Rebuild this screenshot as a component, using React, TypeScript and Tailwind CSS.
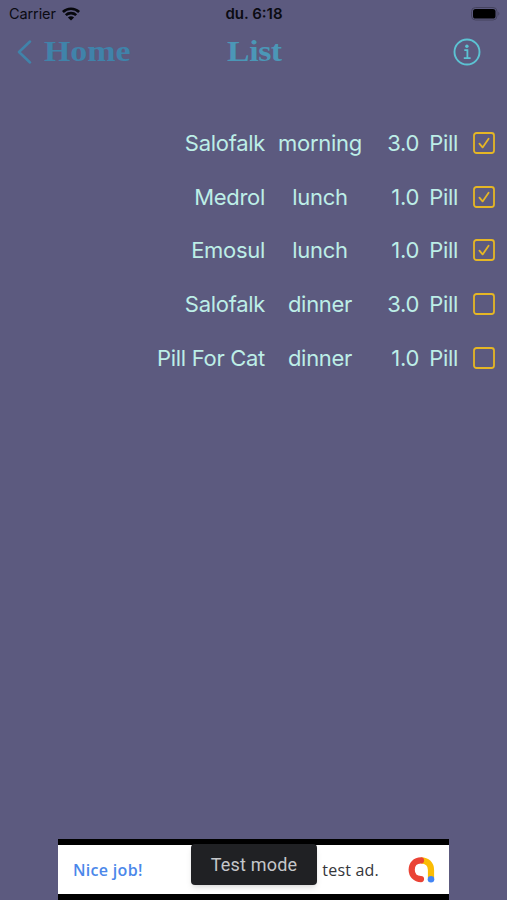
import type { ReactNode } from 'react'

interface Dose {
  name: string
  time: string
  amount: string
  unit: string
  taken: boolean
}

const DOSES: Dose[] = [
  { name: 'Salofalk', time: 'morning', amount: '3.0', unit: 'Pill', taken: true },
  { name: 'Medrol', time: 'lunch', amount: '1.0', unit: 'Pill', taken: true },
  { name: 'Emosul', time: 'lunch', amount: '1.0', unit: 'Pill', taken: true },
  { name: 'Salofalk', time: 'dinner', amount: '3.0', unit: 'Pill', taken: false },
  { name: 'Pill For Cat', time: 'dinner', amount: '1.0', unit: 'Pill', taken: false },
]

function WifiIcon() {
  return (
    <svg width="18" height="14" viewBox="0 0 18 14" fill="none" stroke="#07070c" strokeWidth="2.6">
      <path d="M0.9 5C5.3 0.6 12.7 0.6 17.1 5" />
      <path d="M3.8 8.2C6.6 5.4 11.4 5.4 14.2 8.2" />
      <path d="M9 13.6L5.9 10.5C7.6 8.9 10.4 8.9 12.1 10.5Z" fill="#07070c" stroke="none" />
    </svg>
  )
}

function BatteryIcon() {
  return (
    <svg width="29" height="14" viewBox="0 0 29 14" fill="none">
      <rect x="0.5" y="0.5" width="25.5" height="12.5" rx="4" stroke="#45435f" />
      <rect x="2" y="2" width="22.5" height="9.5" rx="2.6" fill="#000" />
      <path d="M27.3 4.8C28.7 5.5 28.7 8 27.3 8.7Z" fill="#45435f" />
    </svg>
  )
}

function InfoIcon() {
  return (
    <svg width="28" height="28" viewBox="0 0 28 28" fill="none" stroke="#5cc3d3" strokeWidth="1.9">
      <circle cx="14" cy="14" r="12.5" />
      <circle cx="13.9" cy="8.2" r="1.7" fill="#5cc3d3" stroke="none" />
      <path d="M11.3 12.2H14.4V20M10.8 20.2H17.6" strokeWidth="1.8" />
    </svg>
  )
}

function Checkbox({ checked }: { checked: boolean }) {
  return (
    <svg width="22" height="22" viewBox="0 0 22 22" fill="none" stroke="#e5b625" strokeWidth="1.8">
      <rect x="1" y="1" width="20" height="20" rx="2.5" />
      {checked && <path d="M6.4 11.6L9.6 15.4L15.6 6.8" strokeLinecap="round" strokeLinejoin="round" />}
    </svg>
  )
}

function AdLogo() {
  return (
    <svg width="27" height="26" viewBox="0 0 27 26" fill="none" strokeWidth="6.2">
      <path d="M13 3.4C19.2 3.4 23 7.2 23 13V21" stroke="#fbbc04" />
      <path d="M13 3.4C7.2 3.4 3.7 7.6 3.7 12.8S7.4 22.1 13 22.1" stroke="#ea4335" strokeLinecap="round" />
      <circle cx="23" cy="22.2" r="3.3" fill="#4285f4" />
    </svg>
  )
}

function NavTitle({ children }: { children: ReactNode }) {
  return (
    <span className="inline-block origin-left scale-x-[1.13] font-['Liberation_Serif',serif] text-[30px] leading-[34px] font-bold">
      {children}
    </span>
  )
}

export default function App() {
  return (
    <div className="relative flex h-[900px] w-[507px] flex-col overflow-hidden bg-[#5c5a7f] font-['Inter',sans-serif]">
      <div className="grid h-7 grid-cols-3 items-center pr-[7px] pl-[9px] text-[#0b0b12]">
        <div className="flex items-center gap-[6px]">
          <span className="text-[14.5px] tracking-[-0.1px]">Carrier</span>
          <WifiIcon />
        </div>
        <span className="pr-px text-center text-[15px] font-semibold">du. 6:18</span>
        <div className="flex justify-end">
          <BatteryIcon />
        </div>
      </div>

      <div className="grid h-12 grid-cols-[227px_1fr_auto] items-center pr-[26px]">
        <div className="flex items-center pl-[17px] text-[#4083aa]">
          <svg width="15" height="24" viewBox="0 0 15 24" fill="none" stroke="currentColor" strokeWidth="2.5">
            <path d="M13 1.5L2 12L13 22.5" strokeLinecap="round" strokeLinejoin="round" />
          </svg>
          <span className="mb-[3px] ml-3">
            <NavTitle>Home</NavTitle>
          </span>
        </div>
        <span className="mb-[3px] tracking-[-0.4px] text-[#4b97b7]">
          <NavTitle>List</NavTitle>
        </span>
        <InfoIcon />
      </div>

      <ul className="mt-10 pr-3 text-[22px] tracking-[-0.3px] text-[#bdeee7]">
        {DOSES.map((dose, i) => (
          <li key={i} className="grid h-[53.75px] grid-cols-[265px_110px_44px_39px_1fr] items-center whitespace-nowrap">
            <span className="pt-px text-right">{dose.name}</span>
            <span className="pt-px text-center">{dose.time}</span>
            <span className="pt-px text-right">{dose.amount}</span>
            <span className="pt-px text-right">{dose.unit}</span>
            <span className="flex justify-end">
              <Checkbox checked={dose.taken} />
            </span>
          </li>
        ))}
      </ul>

      <div className="relative mt-auto ml-[58px] h-[61px] w-[391px] bg-black pt-[6px]">
        <div className="flex h-[49px] items-center bg-white pr-[14px] pl-[15px] font-['Open_Sans',sans-serif] text-[16px]">
          <span className="font-semibold tracking-[0.3px] text-[#4b87ea]">Nice job!</span>
          <span className="ml-auto tracking-[0.2px] text-[#34363a]">test ad.</span>
          <span className="ml-[29px]">
            <AdLogo />
          </span>
        </div>
        <div className="absolute top-[5px] left-[133px] flex h-[41px] w-[126px] items-center justify-center rounded-[4px] bg-[#202124] font-['Roboto',sans-serif] text-[18px] tracking-[0.2px] text-[#c5c7ca] shadow-md">
          Test mode
        </div>
      </div>
    </div>
  )
}
